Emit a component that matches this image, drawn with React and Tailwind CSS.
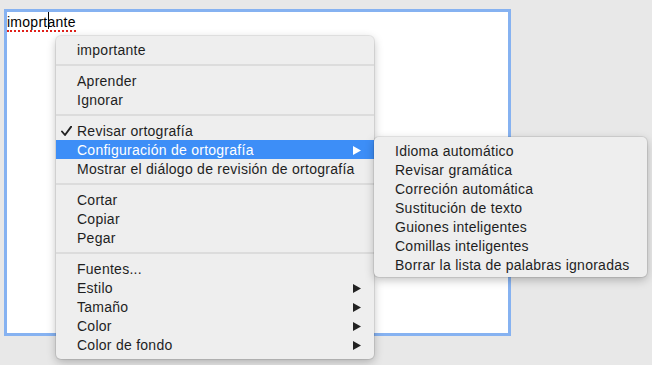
import React from "react";

const font = { fontFamily: '"Liberation Sans", Arial, sans-serif' };

function Arrow({ white }) {
  return (
    <svg width="8" height="9" viewBox="0 0 8 9" className="shrink-0">
      <path d="M0 0 L8 4.5 L0 9 Z" fill={white ? "#ffffff" : "#222222"} />
    </svg>
  );
}

function Check() {
  return (
    <svg width="11" height="10" viewBox="0 0 11 10" className="absolute left-[-16px] top-[-5px]">
      <path d="M1 5.5 L4 9 L10.2 0.6" fill="none" stroke="#222" strokeWidth="1.9" strokeLinecap="round" strokeLinejoin="round" />
    </svg>
  );
}

function Item({ label, arrow, active, check }) {
  return (
    <div
      className={
        "flex h-[19px] items-center pl-[21px] pr-[13px] pt-[1px] " +
        (active ? "bg-[#3d8ef7] text-white" : "text-[#1e1e1e]")
      }
    >
      <span className="relative w-[0px]">{check && <Check />}</span>
      <span className="flex-1 whitespace-nowrap">{label}</span>
      {arrow && <Arrow white={active} />}
    </div>
  );
}

function Sep() {
  return (
    <div className="flex h-[12px] items-center">
      <div className="h-[2px] w-full bg-[#dcdcdc]" />
    </div>
  );
}

export default function App() {
  return (
    <div
      className="relative h-[365px] w-[652px] overflow-hidden bg-[#e8e8e8] text-[14px] leading-[19px] tracking-[0.26px]"
      style={font}
    >
      <div className="ml-[4px] pt-[9px]">
        <div className="h-[327px] w-[507px] border-[3px] border-[#86b2f1] bg-white">
          <div className="relative pt-[1px] text-black">
            <span className="border-b-2 border-dotted border-[#e0201a]">imoprtante</span>
            <span className="absolute left-[41px] top-[0px] h-[17px] w-[1px] bg-black" />
          </div>
        </div>
      </div>

      <div className="absolute left-[56px] top-[36px] w-[318px] rounded-[5px] bg-[#eeeeee] pt-[4px] pb-[5px] shadow-[0_3px_10px_rgba(0,0,0,0.25),0_0_0_1px_rgba(0,0,0,0.08)]">
        <Item label="importante" />
        <Sep />
        <Item label="Aprender" />
        <Item label="Ignorar" />
        <Sep />
        <Item label="Revisar ortografía" check />
        <Item label="Configuración de ortografía" arrow active />
        <Item label="Mostrar el diálogo de revisión de ortografía" />
        <Sep />
        <Item label="Cortar" />
        <Item label="Copiar" />
        <Item label="Pegar" />
        <Sep />
        <Item label="Fuentes..." />
        <Item label="Estilo" arrow />
        <Item label="Tamaño" arrow />
        <Item label="Color" arrow />
        <Item label="Color de fondo" arrow />
      </div>

      <div className="absolute left-[374px] top-[137px] w-[273px] rounded-[5px] bg-[#eeeeee] pt-[4px] pb-[3px] shadow-[0_3px_10px_rgba(0,0,0,0.25),0_0_0_1px_rgba(0,0,0,0.08)]">
        {[
          "Idioma automático",
          "Revisar gramática",
          "Correción automática",
          "Sustitución de texto",
          "Guiones inteligentes",
          "Comillas inteligentes",
          "Borrar la lista de palabras ignoradas",
        ].map((t) => (
          <div key={t} className="flex h-[19px] items-center whitespace-nowrap pl-[21px] pt-[1px] text-[#1e1e1e]">
            {t}
          </div>
        ))}
      </div>
    </div>
  );
}
